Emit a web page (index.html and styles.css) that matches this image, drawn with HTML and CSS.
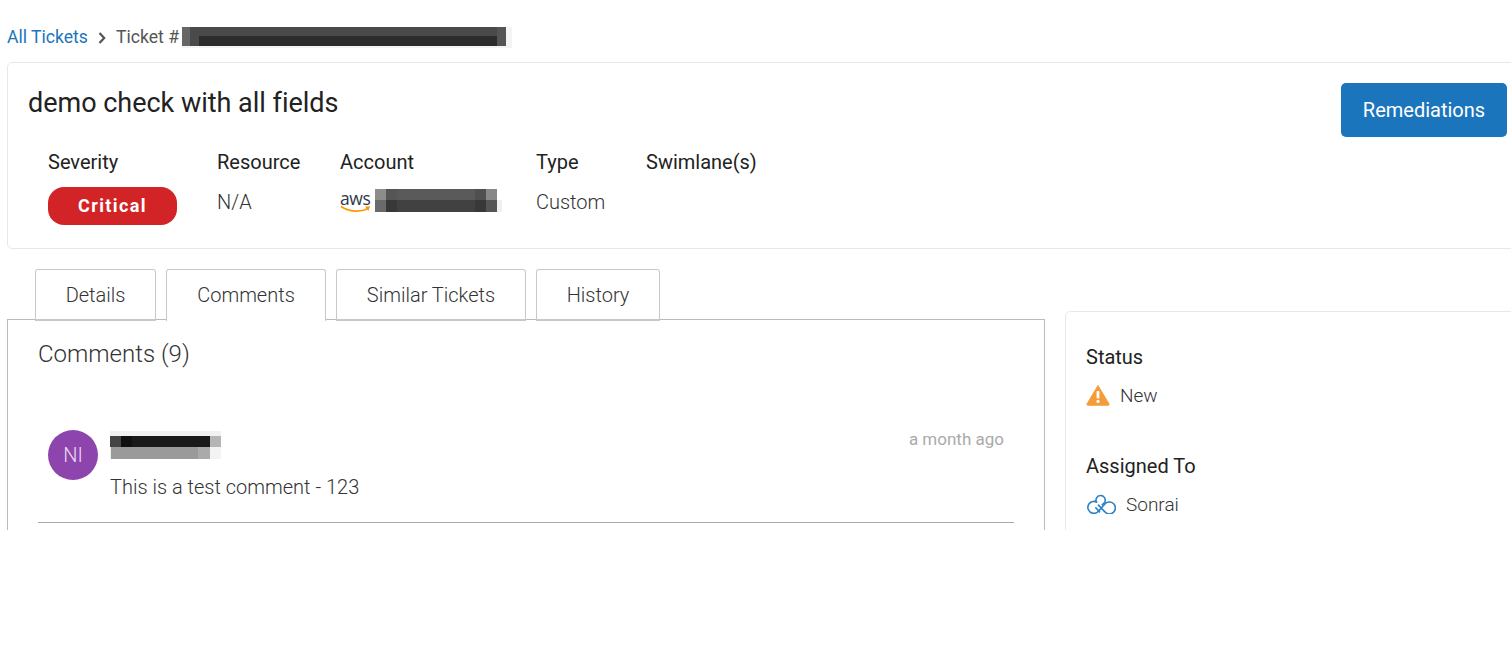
FILE: index.html
```html
<!DOCTYPE html>
<html lang="en">
<head>
<meta charset="utf-8">
<title>Ticket</title>
<link rel="stylesheet" href="styles.css">
</head>
<body>
<div class="page">
  <nav class="crumbs">
    <a class="crumb-link">All Tickets</a>
    <svg class="chev" viewBox="0 0 8 12" width="8" height="12"><path d="M1.500 1 6.200 6 1.500 11" fill="none" stroke="#555" stroke-width="2.200"/></svg>
    <span class="crumb-cur">Ticket #</span>
    <span class="redact redact-ticket"></span>
  </nav>

  <section class="head-card">
    <div class="head-main">
      <h1 class="title">demo check with all fields</h1>
      <div class="meta">
        <div class="meta-col col-sev">
          <div class="meta-label">Severity</div>
          <div class="badge">Critical</div>
        </div>
        <div class="meta-col col-res">
          <div class="meta-label">Resource</div>
          <div class="meta-value">N/A</div>
        </div>
        <div class="meta-col col-acc">
          <div class="meta-label">Account</div>
          <div class="meta-value acc-value">
            <span class="aws"><span class="aws-text">aws</span>
              <svg class="aws-smile" viewBox="0 0 31 9" width="31" height="9"><path d="M1 1.500C9 7 21 7.500 28 3.500" fill="none" stroke="#f90" stroke-width="1.700"/><path d="M25 1.500 30 1.200 28.400 6Z" fill="#f90"/></svg>
            </span>
            <span class="redact redact-acc"></span>
          </div>
        </div>
        <div class="meta-col col-type">
          <div class="meta-label">Type</div>
          <div class="meta-value">Custom</div>
        </div>
        <div class="meta-col">
          <div class="meta-label">Swimlane(s)</div>
        </div>
      </div>
    </div>
    <button class="btn">Remediations</button>
  </section>

  <div class="lower">
    <div class="left">
      <div class="tabs">
        <div class="tab tab-details">Details</div>
        <div class="tab tab-comments active">Comments</div>
        <div class="tab tab-similar">Similar Tickets</div>
        <div class="tab tab-history">History</div>
      </div>
      <div class="panel">
        <h2 class="panel-title">Comments (9)</h2>
        <div class="comment">
          <div class="avatar">NI</div>
          <div class="comment-body">
            <div class="comment-top">
              <span class="redact redact-name"></span>
              <span class="time">a month ago</span>
            </div>
            <p class="comment-text">This is a test comment - 123</p>
          </div>
        </div>
        <hr class="rule">
      </div>
    </div>

    <aside class="side">
      <div class="side-label">Status</div>
      <div class="side-value status-value">
        <svg viewBox="0 0 24 22" width="24" height="22"><path d="M12 1.500 23 20a.8.8 0 0 1-.7 1.200H1.700A.8.8 0 0 1 1 20Z" fill="#f59c38" stroke="#f59c38" stroke-linejoin="round"/><rect x="10.600" y="7" width="2.800" height="7.600" rx=".8" fill="#fff"/><circle cx="12" cy="17.400" r="1.600" fill="#fff"/></svg>
        <span>New</span>
      </div>
      <div class="side-label assigned">Assigned To</div>
      <div class="side-value sonrai-value">
        <svg viewBox="0 0 29 20" width="29" height="20" fill="none" stroke="#2a80c4" stroke-width="1.600"><path d="M10.200 8.400A6 6 0 1 0 11.200 17.500L17.600 10.300A6 6 0 1 1 17.600 17.600L11 10.600"/><path d="M9.600 8.700A4.700 4.700 0 1 1 17.800 8.300L14.800 11.300"/><path d="M8.400 13.300 13 18.400"/></svg>
        <span>Sonrai</span>
      </div>
    </aside>
  </div>
</div>
</body>
</html>
```

FILE: styles.css
```css
* { box-sizing: border-box; }
html, body { margin: 0; padding: 0; background: #fff; }
body { font-family: Roboto, "Liberation Sans", sans-serif; color: #222; overflow: hidden; }
.page { width: 1511px; height: 530px; overflow: hidden; padding: 0 0 0 7px; }

.crumbs { display: flex; align-items: center; height: 62px; padding-top: 12px; font-size: 17.6px; }
.crumb-link { color: #1a75bc; font-weight: 400; }
.chev { margin: 1px 10px 0 10px; }
.crumb-cur { color: #555; font-weight: 400; }

.redact { display: block; }
.redact-ticket {
  width: 330px; height: 21px; margin: 1px 0 0 3px;
  background:
    linear-gradient(90deg, #666 0 8px, #4a4a4a 8px 17px, transparent 17px 315px, #555 315px 324px, #f4f4f4 324px 330px) 0 0 / 100% 19px no-repeat,
    linear-gradient(180deg, #4a4a4a 0 9px, #2c2c2c 9px 19px, #f4f4f4 19px 21px);
}
.redact-acc {
  width: 127px; height: 24px; margin-left: 5px;
  background:
    linear-gradient(90deg, #8c8c8c 0 11px, #555 11px 22px, #5a5a5a 22px 100px, #505050 100px 111px, #888 111px 122px, #fff 122px) 0 0 / 100% 11px no-repeat,
    linear-gradient(90deg, #6a6a6a 0 11px, #383838 11px 22px, #414141 22px 100px, #383838 100px 111px, #555 111px 122px, #f0f0f0 122px 127px) 0 11px / 100% 12px no-repeat;
}
.redact-name {
  width: 111px; height: 28px;
  background:
    linear-gradient(90deg, #f1f1f1 0 100%) 0 0 / 100% 5px no-repeat,
    linear-gradient(90deg, #444 0 11px, #111 11px 22px, #1a1a1a 22px 100px, #b5b5b5 100px 110px) 0 5px / 100% 11px no-repeat,
    linear-gradient(90deg, #eee 0 1px, #9a9a9a 1px 88px, #aaa 88px 100px, #f3f3f3 100px 110px) 0 16px / 100% 12px no-repeat;
}

.head-card { display: flex; justify-content: space-between; align-items: flex-start; width: 1510px; height: 187px; border: 1px solid #e8e8e8; border-radius: 5px; }
.head-main { padding: 20px 0 0 20px; }
.title { margin: 0; font-size: 27px; line-height: 40px; font-weight: 400; color: #222; letter-spacing: -.02px; }
.btn { margin: 20px 9px 0 0; width: 166px; height: 54px; border: 0; border-radius: 5px; background: #1a75bc; color: #fff; font: 400 20px Roboto, sans-serif; }

.meta { display: flex; margin: 27px 0 0 20px; }
.meta-label { font-size: 20px; line-height: 24px; color: #222; }
.meta-value { margin-top: 16px; font-size: 20px; line-height: 24px; font-weight: 300; color: #333; }
.col-sev { width: 169px; }
.col-res { width: 123px; }
.col-acc { width: 196px; }
.col-type { width: 110px; }
.badge { margin-top: 13px; width: 129px; height: 38px; border-radius: 16px; background: #d22426; color: #fff; font-size: 18px; font-weight: 700; line-height: 38px; text-align: center; letter-spacing: 1.4px; }
.acc-value { display: flex; align-items: flex-start; margin-top: 15px; }
.aws { position: relative; display: block; width: 30px; height: 26px; }
.aws-text { display: block; font: 500 17.5px/18px "Open Sans", sans-serif; letter-spacing: -.4px; color: #2f3a48; }
.aws-smile { position: absolute; left: 0; top: 16px; }

.lower { display: flex; align-items: flex-start; margin-top: 20px; }
.left { width: 1038px; }
.tabs { display: flex; padding-left: 28px; gap: 10px; height: 52px; position: relative; z-index: 1; }
.tab { height: 52px; border: 1px solid #c8c8c8; border-bottom-width: 2px; border-radius: 3px 3px 0 0; background: #fff; font-size: 20px; font-weight: 300; line-height: 50px; text-align: center; color: #333; }
.tab-details { width: 121px; }
.tab-comments { width: 160px; border-bottom: 0; }
.tab-similar { width: 190px; }
.tab-history { width: 124px; }
.panel { margin-top: -2px; height: 300px; border: 1px solid #bbb; padding: 0 30px; }
.panel-title { margin: 17px 0 0; font-size: 24px; line-height: 34px; font-weight: 300; color: #333; }
.comment { display: flex; margin: 59px 0 0 10px; }
.avatar { width: 50px; height: 50px; flex: none; border-radius: 50%; background: #8e44ad; color: #e9dcef; font-size: 20px; font-weight: 300; line-height: 50px; text-align: center; }
.comment-body { flex: 1; margin-left: 12px; }
.comment-top { display: flex; justify-content: space-between; height: 28px; }
.time { margin: 0 10px 0 0; font-size: 17px; line-height: 18px; font-weight: 400; color: #aaa; }
.comment-text { margin: 17px 0 0; font-size: 20px; line-height: 24px; font-weight: 300; color: #333; }
.redact-name { margin-top: 1px; }
.rule { margin: 23px 0 0; border: 0; border-top: 1px solid #aaa; width: 976px; }

.side { margin: 42px 0 0 20px; width: 460px; height: 260px; border: 1px solid #e8e8e8; border-radius: 5px; padding: 33px 20px 0; flex: none; }
.side-label { font-size: 20px; line-height: 24px; color: #222; }
.side-value { display: flex; align-items: center; font-size: 19px; font-weight: 300; color: #333; }
.status-value { margin-top: 14px; height: 24px; gap: 10px; }
.assigned { margin-top: 47px; }
.sonrai-value { margin-top: 14px; height: 24px; gap: 10px; padding-left: 1px; }
```
